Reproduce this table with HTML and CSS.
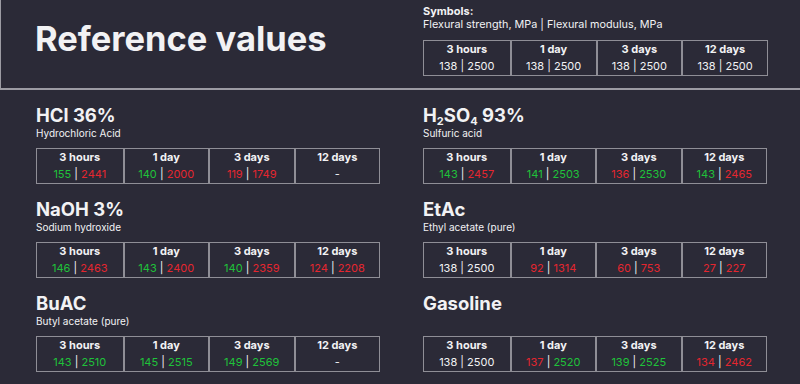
FILE: index.html
```html
<!DOCTYPE html>
<html lang="en">
<head>
<meta charset="utf-8">
<title>Reference values</title>
<link rel="stylesheet" href="styles.css">
</head>
<body>
<header class="hero">
  <h1 class="hero-title">Reference values</h1>
  <div class="legend">
    <div class="legend-head">Symbols:</div>
    <div class="legend-text">Flexural strength, MPa | Flexural modulus, MPa</div>
    <div class="grid-table">
      <div class="cell"><div class="lbl">3 hours</div><div class="val">138 | 2500</div></div>
      <div class="cell"><div class="lbl">1 day</div><div class="val">138 | 2500</div></div>
      <div class="cell"><div class="lbl">3 days</div><div class="val">138 | 2500</div></div>
      <div class="cell"><div class="lbl">12 days</div><div class="val">138 | 2500</div></div>
    </div>
  </div>
</header>
<main class="sections">
  <section class="chem">
    <h2 class="chem-name">HCl 36%</h2>
    <div class="chem-sub">Hydrochloric Acid</div>
    <div class="grid-table">
      <div class="cell"><div class="lbl">3 hours</div><div class="val"><span class="g">155</span> | <span class="r">2441</span></div></div>
      <div class="cell"><div class="lbl">1 day</div><div class="val"><span class="g">140</span> | <span class="r">2000</span></div></div>
      <div class="cell"><div class="lbl">3 days</div><div class="val"><span class="r">119</span> | <span class="r">1749</span></div></div>
      <div class="cell"><div class="lbl">12 days</div><div class="val">-</div></div>
    </div>
  </section>
  <section class="chem">
    <h2 class="chem-name">H<sub>2</sub>SO<sub>4</sub> 93%</h2>
    <div class="chem-sub">Sulfuric acid</div>
    <div class="grid-table">
      <div class="cell"><div class="lbl">3 hours</div><div class="val"><span class="g">143</span> | <span class="r">2457</span></div></div>
      <div class="cell"><div class="lbl">1 day</div><div class="val"><span class="g">141</span> | <span class="g">2503</span></div></div>
      <div class="cell"><div class="lbl">3 days</div><div class="val"><span class="r">136</span> | <span class="g">2530</span></div></div>
      <div class="cell"><div class="lbl">12 days</div><div class="val"><span class="g">143</span> | <span class="r">2465</span></div></div>
    </div>
  </section>
  <section class="chem">
    <h2 class="chem-name">NaOH 3%</h2>
    <div class="chem-sub">Sodium hydroxide</div>
    <div class="grid-table">
      <div class="cell"><div class="lbl">3 hours</div><div class="val"><span class="g">146</span> | <span class="r">2463</span></div></div>
      <div class="cell"><div class="lbl">1 day</div><div class="val"><span class="g">143</span> | <span class="r">2400</span></div></div>
      <div class="cell"><div class="lbl">3 days</div><div class="val"><span class="g">140</span> | <span class="r">2359</span></div></div>
      <div class="cell"><div class="lbl">12 days</div><div class="val"><span class="r">124</span> | <span class="r">2208</span></div></div>
    </div>
  </section>
  <section class="chem">
    <h2 class="chem-name">EtAc</h2>
    <div class="chem-sub">Ethyl acetate (pure)</div>
    <div class="grid-table">
      <div class="cell"><div class="lbl">3 hours</div><div class="val">138 | 2500</div></div>
      <div class="cell"><div class="lbl">1 day</div><div class="val"><span class="r">92</span> | <span class="r">1314</span></div></div>
      <div class="cell"><div class="lbl">3 days</div><div class="val"><span class="r">60</span> | <span class="r">753</span></div></div>
      <div class="cell"><div class="lbl">12 days</div><div class="val"><span class="r">27</span> | <span class="r">227</span></div></div>
    </div>
  </section>
  <section class="chem">
    <h2 class="chem-name">BuAC</h2>
    <div class="chem-sub">Butyl acetate (pure)</div>
    <div class="grid-table">
      <div class="cell"><div class="lbl">3 hours</div><div class="val"><span class="g">143</span> | <span class="g">2510</span></div></div>
      <div class="cell"><div class="lbl">1 day</div><div class="val"><span class="g">145</span> | <span class="g">2515</span></div></div>
      <div class="cell"><div class="lbl">3 days</div><div class="val"><span class="g">149</span> | <span class="g">2569</span></div></div>
      <div class="cell"><div class="lbl">12 days</div><div class="val">-</div></div>
    </div>
  </section>
  <section class="chem">
    <h2 class="chem-name">Gasoline</h2>
    <div class="chem-sub"></div>
    <div class="grid-table">
      <div class="cell"><div class="lbl">3 hours</div><div class="val">138 | 2500</div></div>
      <div class="cell"><div class="lbl">1 day</div><div class="val"><span class="r">137</span> | <span class="g">2520</span></div></div>
      <div class="cell"><div class="lbl">3 days</div><div class="val"><span class="g">139</span> | <span class="g">2525</span></div></div>
      <div class="cell"><div class="lbl">12 days</div><div class="val"><span class="r">134</span> | <span class="r">2462</span></div></div>
    </div>
  </section>
</main>
</body>
</html>
```

FILE: styles.css
```css
* { box-sizing: border-box; }
html, body { margin: 0; padding: 0; }
body {
  width: 800px;
  height: 384px;
  overflow: hidden;
  background: #2b2a37;
  color: #f2f2f4;
  font-family: Inter, "Noto Sans", "Liberation Sans", sans-serif;
}
.hero {
  height: 90px;
  border-left: 1px solid #9c9ba3;
  border-bottom: 2px solid #9c9ba3;
  display: flex;
  align-items: flex-start;
  padding-left: 34px;
}
.hero-title {
  margin: 0;
  width: 388px;
  font-size: 34.5px;
  font-weight: 700;
  line-height: 40px;
  padding-top: 19px;
  letter-spacing: 0;
}
.legend {
  width: 345px;
  padding-top: 4px;
}
.legend-head {
  font-size: 11px;
  font-weight: 700;
  line-height: 14px;
}
.legend-text {
  font-size: 10.8px;
  line-height: 14px;
  margin-bottom: 8px;
}
.grid-table {
  display: grid;
  grid-template-columns: repeat(4, 1fr);
  height: 36px;
  border: 1px solid #8f8e96;
}
.cell {
  border-left: 2px solid #8f8e96;
  text-align: center;
  padding-top: 1px;
}
.cell:first-child { border-left: none; }
.lbl {
  font-size: 11px;
  font-weight: 700;
  line-height: 14px;
}
.val {
  font-size: 11px;
  line-height: 14px;
  margin-top: 3px;
}
.g { color: #1fc23a; }
.r { color: #e5262f; }
.sections {
  display: grid;
  grid-template-columns: 344px 344px;
  column-gap: 43px;
  row-gap: 14px;
  padding: 14px 0 0 36px;
}
.chem-name {
  margin: 0;
  font-size: 18.5px;
  font-weight: 700;
  line-height: 22px;
}
.chem-name sub {
  font-size: 11px;
  line-height: 0;
  vertical-align: -3px;
}
.chem-sub {
  font-size: 10px;
  line-height: 14px;
  height: 14px;
  margin-bottom: 8px;
}
```
